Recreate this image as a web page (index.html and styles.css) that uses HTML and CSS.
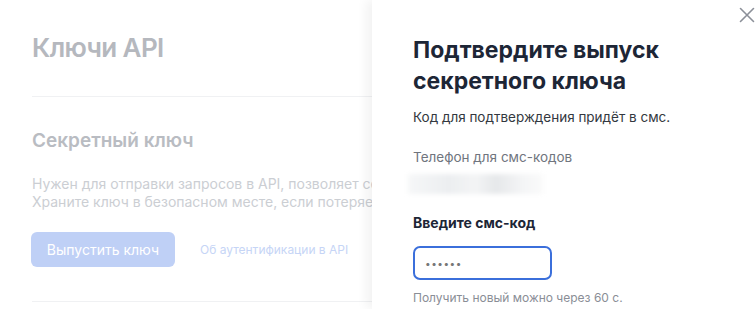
FILE: index.html
```html
<!DOCTYPE html>
<html>
  <head>
    <meta charset="utf-8"/>
    <link rel="stylesheet" href="styles.css">
  </head>
  <body>
    <div class="page">
      <h1 class="page-title">Ключи API</h1>
      <div class="section">
        <h2 class="section-title">Секретный ключ</h2>
        <p class="section-text">
          Нужен для отправки запросов в API, позволяет сервису идентифицировать вас.<br/>
          Храните ключ в безопасном месте, если потеряете — выпустите новый.
        </p>
        <div class="actions">
          <button class="btn-primary">Выпустить ключ</button>
          <a class="link" href="#">Об аутентификации в API</a>
        </div>
      </div>
    </div>

    <div class="drawer">
      <button class="close" aria-label="Закрыть">
        <svg width="16" height="16" viewBox="0 0 16 16">
          <path d="M1.5 1.5 L14.5 14.5 M14.5 1.5 L1.5 14.5" stroke="#8c9099" stroke-width="1.6" fill="none" stroke-linecap="round"/>
        </svg>
      </button>
      <h2 class="drawer-title">Подтвердите выпуск секретного ключа</h2>
      <p class="drawer-text">Код для подтверждения придёт в смс.</p>
      <div class="field-label">Телефон для смс-кодов</div>
      <div class="phone"></div>
      <div class="code-label">Введите смс-код</div>
      <div class="code-input">••••••</div>
      <div class="hint">Получить новый можно через 60 с.</div>
    </div>
  </body>
</html>
```

FILE: styles.css
```css
html, body {
  height: 100%;
  padding: 0;
  margin: 0;
}
body {
  font-family: "Inter", "Noto Sans", sans-serif;
  background-color: #fff;
  overflow: hidden;
}
.page {
  padding: 0 0 0 32px;
  width: 700px;
}
.page-title {
  margin: 0;
  padding-top: 32px;
  height: 97px;
  box-sizing: border-box;
  font-size: 26px;
  font-weight: 600;
  color: #b5b8be;
  letter-spacing: -0.6px;
  border-bottom: 1px solid #f0f1f3;
  width: 340px;
}
.section {
  padding-top: 32px;
  height: 172px;
  border-bottom: 1px solid #f0f1f3;
  width: 340px;
}
.section-title {
  margin: 0;
  font-size: 19px;
  font-weight: 600;
  color: #b9bcc2;
  line-height: 24px;
}
.section-text {
  margin: 22px 0 0;
  font-size: 14px;
  line-height: 18px;
  color: #cbced3;
  white-space: nowrap;
}
.actions {
  display: flex;
  align-items: center;
  margin-top: 21px;
}
.btn-primary {
  background-color: #bfd0f6;
  color: #fff;
  border: 0;
  border-radius: 6px;
  height: 35px;
  width: 144px;
  margin-left: -1px;
  font-family: inherit;
  font-size: 14px;
}
.link {
  margin-left: 25px;
  font-size: 12px;
  color: #c6d5f6;
  text-decoration: none;
}
.drawer {
  position: absolute;
  top: 0;
  left: 372px;
  right: 0;
  bottom: 0;
  background-color: #fff;
  padding: 35px 0 0 41px;
  box-shadow: -6px 0 10px rgba(0, 0, 0, 0.05);
}
.close {
  position: absolute;
  top: 7px;
  right: 1px;
  padding: 0;
  border: 0;
  background: none;
  width: 16px;
  height: 16px;
}
.drawer-title {
  margin: 0;
  width: 260px;
  font-size: 23px;
  font-weight: 700;
  line-height: 31px;
  color: #1d2636;
  letter-spacing: 0;
}
.drawer-text {
  margin: 11px 0 0;
  font-size: 13.5px;
  line-height: 18px;
  color: #333840;
}
.field-label {
  margin-top: 22px;
  font-size: 13.5px;
  line-height: 18px;
  color: #70757e;
}
.phone {
  margin: 8px 0 0 -5px;
  width: 135px;
  height: 20px;
  background: linear-gradient(90deg, #f6f7f8 0%, #eceef0 30%, #f3f4f5 50%, #e6e8ea 65%, #f4f5f6 85%, #fafafa 100%);
  filter: blur(2px);
}
.code-label {
  margin-top: 20px;
  font-size: 14px;
  font-weight: 700;
  line-height: 18px;
  color: #1d2636;
}
.code-input {
  margin-top: 14px;
  width: 139px;
  height: 34px;
  box-sizing: border-box;
  border: 2px solid #3b6fdb;
  border-radius: 7px;
  padding-left: 10px;
  font-size: 10px;
  line-height: 30px;
  letter-spacing: 0.5px;
  color: #777;
}
.hint {
  margin-top: 10px;
  font-size: 12px;
  line-height: 16px;
  color: #8a8e96;
}
```
